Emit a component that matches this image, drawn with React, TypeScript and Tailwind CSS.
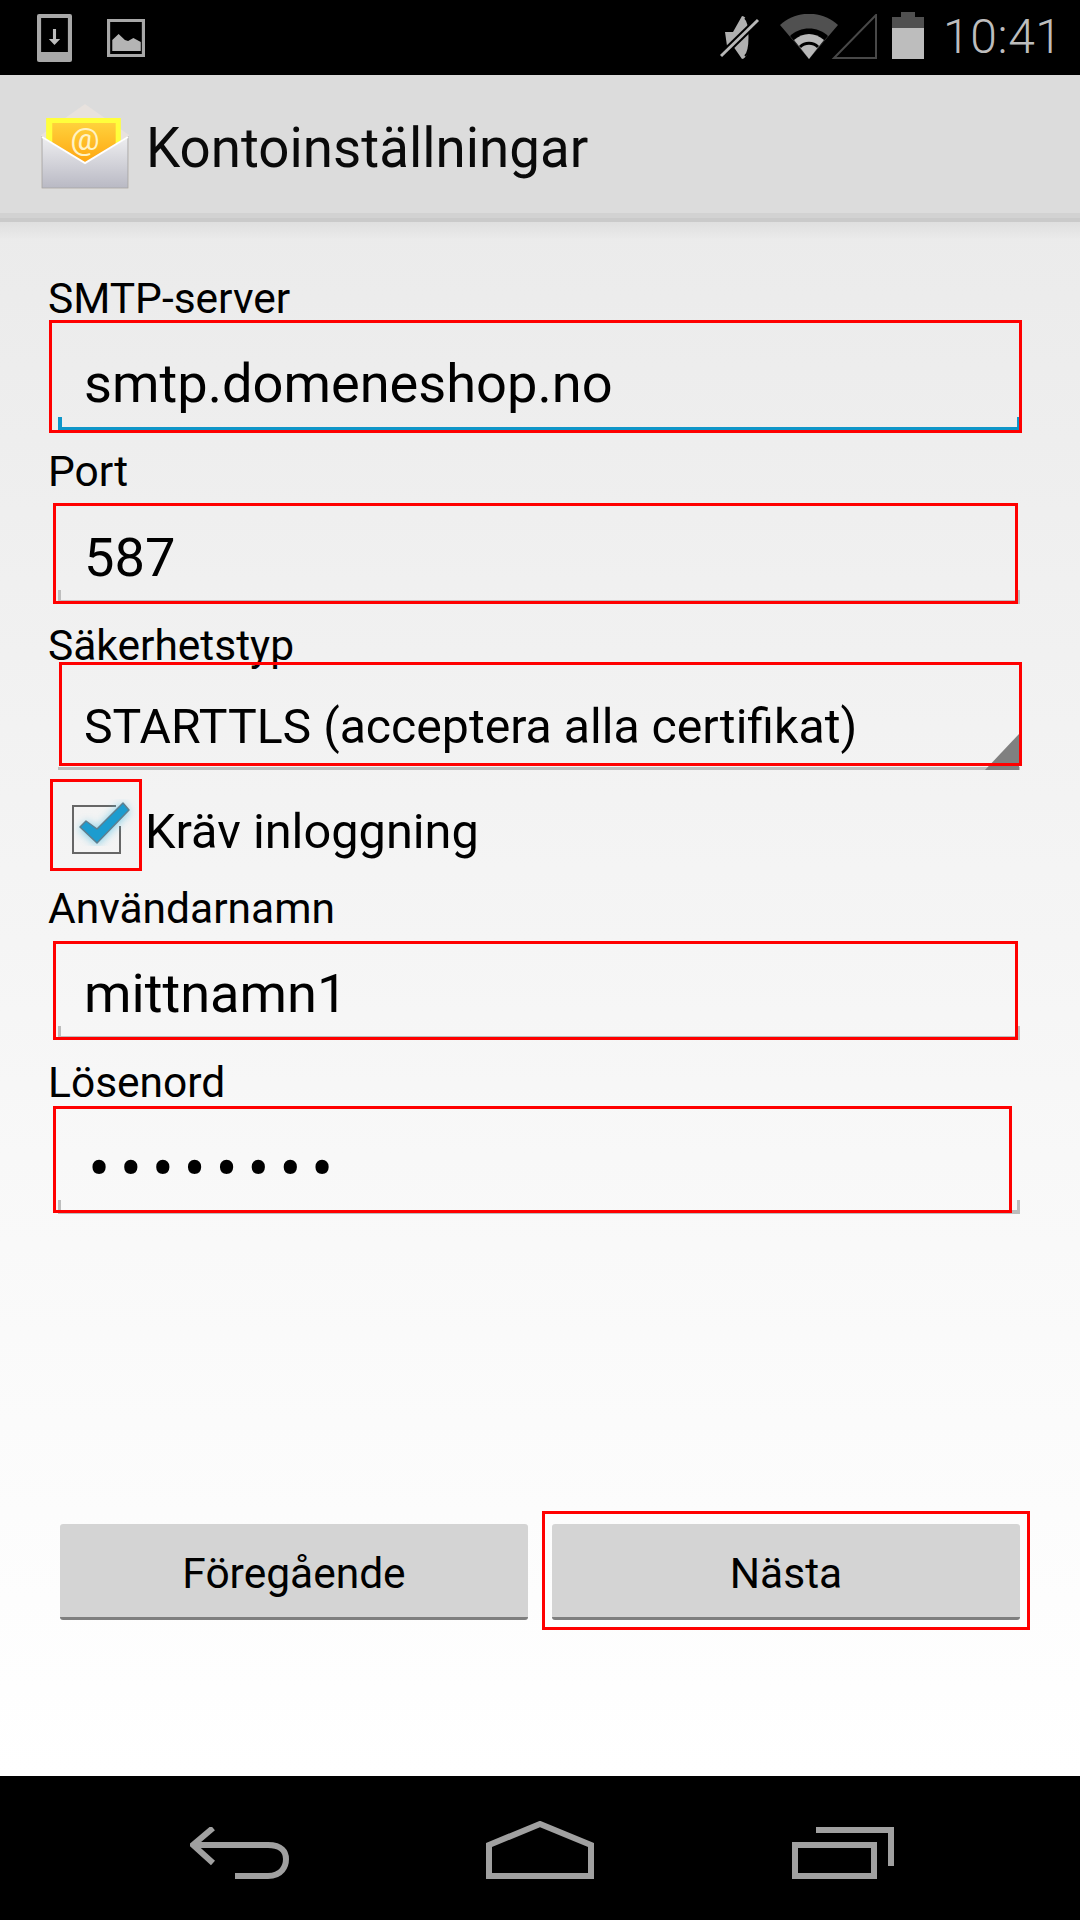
const font = { fontFamily: 'Roboto, "Noto Sans", sans-serif' };

function StatusBar() {
  return (
    <div className="flex h-[75px] shrink-0 items-start bg-black">
      <svg className="ml-[37px] mt-[14px]" width="35" height="48" viewBox="0 0 34 48" preserveAspectRatio="none">
        <rect width="34" height="48" rx="2" fill="#a8a8a8" />
        <rect x="4" y="4" width="26" height="34" fill="#000" />
        <path d="M15.500 15h3v10h4l-5.500 6-5.500-6h4z" fill="#bdbdbd" />
      </svg>
      <svg className="ml-[35px] mt-[19px]" width="38" height="38" viewBox="0 0 36 38" preserveAspectRatio="none">
        <rect x="1.500" y="1.500" width="33" height="35" fill="none" stroke="#a8a8a8" strokeWidth="3" />
        <path d="M5 32V21l6-6 6 6 3 1 5-3 7 4v9z" fill="#b4b4b4" />
      </svg>
      <svg className="ml-[575px] mt-[14px]" width="40" height="48" viewBox="0 0 40 48">
        <path d="M5 18h8L22 2c5 0 8 10 8 21s-3 22-8 22l-9-13H7z" fill="#b0b0b0" />
        <path d="M25 4c6 5 6 33 0 38" fill="none" stroke="#000" strokeWidth="2" />
        <path d="M1 42 38 6" stroke="#000" strokeWidth="7" />
        <path d="M1 42 38 6" stroke="#b8b8b8" strokeWidth="3" />
      </svg>
      <svg className="ml-[20px] mt-[14px]" width="98" height="46" viewBox="0 0 98 46">
        <path d="M0 11C16-4 42-4 58 11L29 45z" fill="#505050" />
        <path d="M10 22C20 12 38 12 48 22L29 45z" fill="#000" />
        <path d="M14 26C23 18 35 18 44 26L29 45z" fill="#b8b8b8" />
        <path d="M20 33C25 28 33 28 38 33" fill="none" stroke="#000" strokeWidth="3" />
        <path d="M54 44 96 1V44z" fill="none" stroke="#484848" strokeWidth="2" />
      </svg>
      <svg className="ml-[14px] mt-[12px]" width="32" height="47" viewBox="0 0 32 47">
        <path d="M9 0h14v5h9v42H0V5h9z" fill="#505050" />
        <rect y="16" width="32" height="31" fill="#bdbdbd" />
      </svg>
      <span className="ml-[19px] mt-[9px] text-[48px] leading-[56px] font-light tracking-[0.6px] text-[#bdbdbd]">10:41</span>
    </div>
  );
}

function ActionBar() {
  return (
    <div className="shrink-0">
      <div className="flex h-[138px] items-start bg-[#dcdcdc]">
        <svg className="ml-[41px] mt-[28px]" width="88" height="87" viewBox="0 0 86 87" preserveAspectRatio="none">
          <defs>
            <linearGradient id="env" x1="0" y1="0" x2="0" y2="1">
              <stop offset="0" stopColor="#eeeef0" />
              <stop offset="1" stopColor="#b9b9c4" />
            </linearGradient>
            <linearGradient id="let" x1="0" y1="0" x2="0" y2="1">
              <stop offset="0" stopColor="#ffd23c" />
              <stop offset="1" stopColor="#ff9f0a" />
            </linearGradient>
          </defs>
          <path d="M0 32 43 1l43 31v54H0z" fill="#e8e2de" />
          <path d="M5 15h73v44H5z" fill="#ffff3c" />
          <path d="M11 20h62v46H11z" fill="url(#let)" />
          <path d="M1 34 43 60l42-26v51H1z" fill="url(#env)" stroke="#a9a9a9" strokeWidth="1" />
          <path d="M1 34 43 60l42-26" fill="none" stroke="#fff" strokeWidth="2" />
          <text x="43" y="47" textAnchor="middle" fontSize="32" fill="#fff3c4" style={font}>@</text>
        </svg>
        <span className="ml-[17px] mt-[41px] text-[54.700px] leading-[64px] text-[#0a0a0a]">Kontoinställningar</span>
      </div>
      <div className="h-[5px] bg-[#d2d2d2]" />
      <div className="h-[4px] bg-[#cacaca]" />
    </div>
  );
}

function Red({ className }: { className: string }) {
  return <div className={`pointer-events-none absolute border-[3px] border-[#ff0000] ${className}`} />;
}

function Label({ text, className }: { text: string; className: string }) {
  return <div className={`ml-[48px] h-[46px] text-[42.5px] leading-[46px] text-black ${className}`}>{text}</div>;
}

function EditText({
  active,
  children,
  className,
  red,
}: {
  active?: boolean;
  children: React.ReactNode;
  className: string;
  red: string;
}) {
  const line = active ? 'bg-[#0e96c9]' : 'bg-[#bdbdbd]';
  const shift = active ? 'bottom-[1px]' : 'bottom-0';
  return (
    <div className={`relative mx-[58px] flex w-[962px] items-end ${className}`}>
      <div className={`absolute left-0 h-[4px] w-full ${shift} ${line}`} />
      <div className={`absolute left-0 h-[14px] ${active ? 'w-[4px]' : 'w-[3px]'} ${shift} ${line}`} />
      <div className={`absolute right-0 h-[14px] w-[3px] ${shift} ${line}`} />
      <div className="pl-[26px] text-[54.200px] leading-[64px] text-black">{children}</div>
      <Red className={red} />
    </div>
  );
}

function Spinner() {
  return (
    <div className="relative mx-[58px] flex h-[101px] w-[962px] items-end pb-[15px]">
      <div className="absolute bottom-0 left-0 h-[3px] w-full bg-[#bdbdbd]" />
      <svg className="absolute right-[1px] bottom-0" width="34" height="36" viewBox="0 0 34 36">
        <path d="M34 0v36H0z" fill="#808080" />
      </svg>
      <div className="pl-[26px] text-[48.200px] leading-[56px] text-black">STARTTLS (acceptera alla certifikat)</div>
      <Red className="top-[-7px] left-[1px] h-[104px] w-[963px]" />
    </div>
  );
}

function CheckRow() {
  return (
    <div className="mt-[9px] flex h-[92px] items-center pl-[50px]">
      <div className="relative h-[92px] w-[92px] shrink-0">
        <Red className="inset-0" />
        <svg className="absolute top-[20px] left-[20px]" width="70" height="56" viewBox="0 0 70 56">
          <defs>
            <filter id="glow" x="-30%" y="-30%" width="160%" height="160%">
              <feGaussianBlur stdDeviation="4" />
            </filter>
          </defs>
          <path d="M46 7H3v47h47V27" fill="none" stroke="#666" strokeWidth="2" />
          <path d="M13 26 27 38 56 8" fill="none" stroke="#63c4e4" strokeWidth="12" filter="url(#glow)" opacity=".75" />
          <path d="M10 28 16 22 27 30 53 4 59 11 27 44z" fill="#1c9ccf" stroke="#5e7f8f" strokeWidth="1.500" strokeLinejoin="round" />
        </svg>
      </div>
      <span className="ml-[3px] mt-[14px] text-[48.700px] leading-[54px] text-black">Kräv inloggning</span>
    </div>
  );
}

function AndroidButton({ text, children }: { text: string; children?: React.ReactNode }) {
  return (
    <div className="relative flex h-[96px] w-[468px] items-center justify-center rounded-[3px] border-b-[3px] border-[#7f7f7f] bg-[#d4d4d4] pt-[6px] text-[42.5px] text-black">
      {text}
      {children}
    </div>
  );
}

function NavBar() {
  return (
    <div className="flex h-[144px] shrink-0 items-start bg-black pt-[45px] pl-[190px]">
      <svg className="mt-[6px]" width="100" height="52" viewBox="0 0 100 52">
        <path d="M23 1 3 18 23 36M3 18H78c14 0 18 7 18 14s-4 17-18 17H45" fill="none" stroke="#a0a0a0" strokeWidth="6" />
      </svg>
      <svg className="ml-[196px]" width="108" height="58" viewBox="0 0 108 58">
        <path d="M3 55V24L54 3l51 21v31z" fill="none" stroke="#a0a0a0" strokeWidth="6" />
      </svg>
      <svg className="ml-[198px] mt-[6px]" width="102" height="52" viewBox="0 0 102 52">
        <path d="M3 18h79v31H3z" fill="none" stroke="#a0a0a0" strokeWidth="6" />
        <path d="M24 3h75v36" fill="none" stroke="#a0a0a0" strokeWidth="6" />
      </svg>
    </div>
  );
}

export default function App() {
  return (
    <div className="flex h-[1920px] w-[1080px] flex-col overflow-hidden bg-white" style={font}>
      <StatusBar />
      <ActionBar />
      <div className="flex min-h-0 flex-1 flex-col bg-gradient-to-b from-[#ebebeb] via-[#f8f8f8] via-60% to-white">
        <div className="h-[18px] bg-gradient-to-b from-[#dfdfdf] to-[#ebebeb00]" />
        <Label text="SMTP-server" className="mt-[36px]" />
        <EditText active className="h-[110px] pb-[16px]" red="top-[-2px] left-[-9px] h-[113px] w-[973px]">
          smtp.domeneshop.no
        </EditText>
        <Label text="Port" className="mt-[17px]" />
        <EditText className="h-[109px] pb-[14px]" red="top-[8px] left-[-5px] h-[101px] w-[965px]">
          587
        </EditText>
        <Label text="Säkerhetstyp" className="mt-[19px]" />
        <Spinner />
        <CheckRow />
        <Label text="Användarnamn" className="mt-[15px]" />
        <EditText className="h-[108px] pb-[14px]" red="top-[9px] left-[-5px] h-[99px] w-[965px]">
          mittnamn1
        </EditText>
        <Label text="Lösenord" className="mt-[20px]" />
        <EditText className="h-[108px] pb-[8px]" red="top-0 left-[-5px] h-[107px] w-[959px]">
          <span className="pl-[4px] text-[66px] tracking-[9.600px]">••••••••</span>
        </EditText>
        <div className="mt-[310px] flex gap-[24px] pl-[60px]">
          <AndroidButton text="Föregående" />
          <AndroidButton text="Nästa">
            <Red className="top-[-13px] left-[-10px] h-[119px] w-[488px]" />
          </AndroidButton>
        </div>
      </div>
      <NavBar />
    </div>
  );
}
